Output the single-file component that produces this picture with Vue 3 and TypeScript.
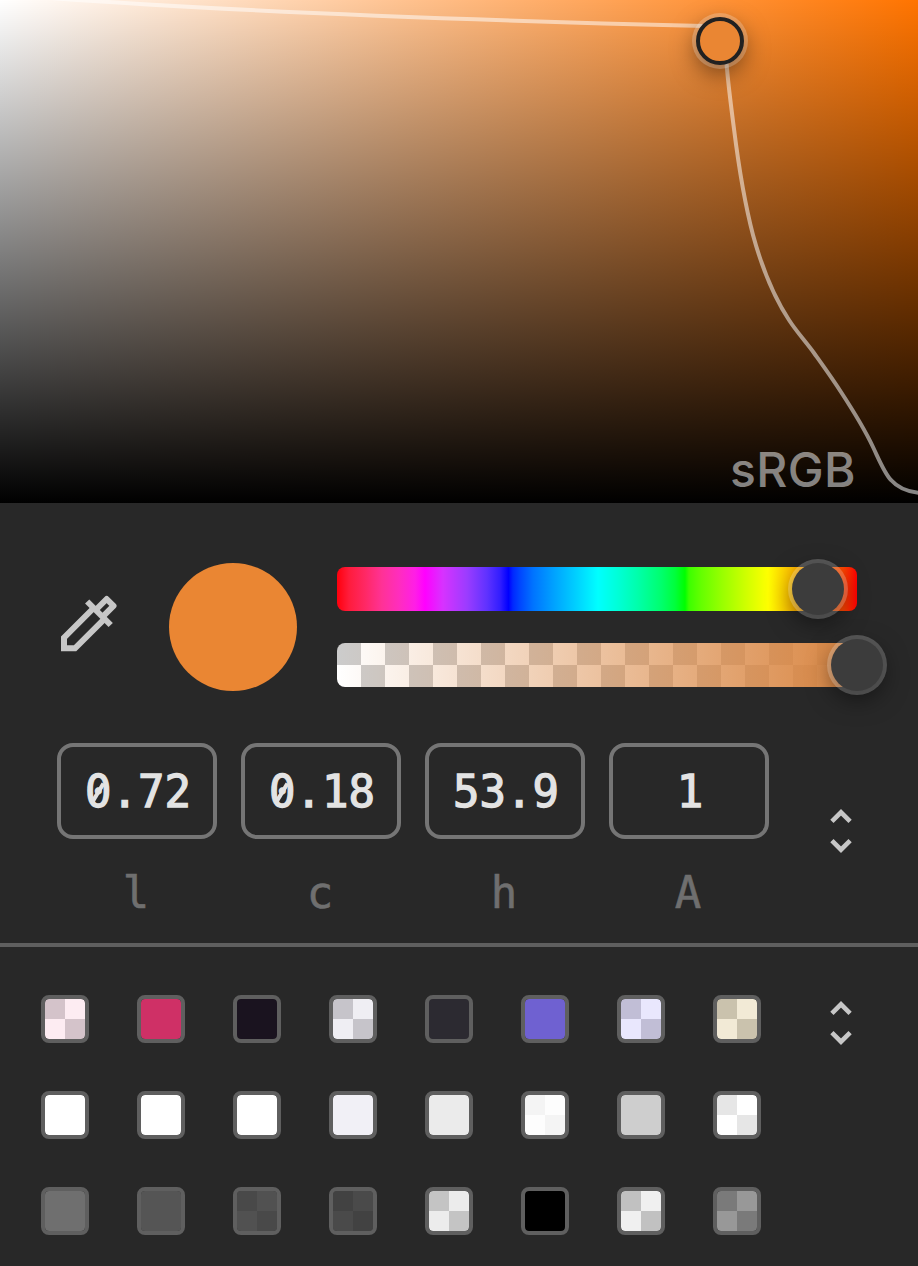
<script setup lang="ts">
interface Channel {
  label: string
  value: string
}

interface Swatch {
  base: string
  alt?: string
}

const channels: Channel[] = [
  { label: 'l', value: '0.72' },
  { label: 'c', value: '0.18' },
  { label: 'h', value: '53.9' },
  { label: 'A', value: '1' },
]

// `alt` is the tone of the darker checkerboard cells of a translucent colour.
const swatches: Swatch[] = [
  { base: '#fdecf2', alt: '#d4c3ca' },
  { base: '#cf3066' },
  { base: '#1a131f' },
  { base: '#efeef3', alt: '#c6c4ca' },
  { base: '#2c2a31' },
  { base: '#6f61d1' },
  { base: '#e9e7fd', alt: '#c1bed6' },
  { base: '#f2ead6', alt: '#cac2ad' },
  { base: '#ffffff' },
  { base: '#ffffff' },
  { base: '#ffffff' },
  { base: '#f1f0f6' },
  { base: '#ebebeb' },
  { base: '#fdfdfd', alt: '#f4f4f4' },
  { base: '#cecece' },
  { base: '#ffffff', alt: '#e6e6e6' },
  { base: '#6f6f6f' },
  { base: '#555555' },
  { base: '#515151', alt: '#494949' },
  { base: '#4a4a4a', alt: '#424242' },
  { base: '#ececec', alt: '#c4c4c4' },
  { base: '#000000' },
  { base: '#f0f0f0', alt: '#c1c1c1' },
  { base: '#989898', alt: '#7a7a7a' },
]
</script>

<template>
  <main class="picker">
    <section class="plane">
      <svg class="gamut" viewBox="0 0 918 503" aria-hidden="true">
        <path d="M50 -2 C200 9 400 18.500 704 26" />
        <path
          d="M726.500 63 C728 83 731 106 734 129 C740 177 747 212 753 235 C762 268 774 297 789 320 C796 331 806 342 814 353 C824 367 832 378 841 392 C856 415 865 430 873 447 C881 464 885 474 891 480 C898 488 909 492 920 493"
        />
      </svg>
      <span class="gamut-label">sRGB</span>
      <span class="pointer"></span>
    </section>

    <section class="controls">
      <button class="dropper" aria-label="Pick a color">
        <svg viewBox="57 129 180 180" width="60" height="60">
          <path d="M161 174 L72 263 V295 H105 L193.500 206.500" />
          <path class="cap" d="M167 180 L200 147 L220.500 167.500 L187.500 200.500" />
          <path d="M141.500 154.500 L212 225" />
        </svg>
      </button>
      <div class="preview"></div>
      <div class="sliders">
        <div class="track hue"><span class="thumb hue-thumb"></span></div>
        <div class="track alpha"><span class="thumb alpha-thumb"></span></div>
      </div>
    </section>

    <section class="values">
      <div class="channels">
        <label v-for="channel in channels" :key="channel.label" class="channel">
          <span class="field"
            ><span
              v-for="(char, index) in channel.value"
              :key="index"
              :class="{ zero: char === '0' }"
              >{{ char }}</span
            ></span
          >
          <span class="name">{{ channel.label }}</span>
        </label>
      </div>
      <button class="switcher" aria-label="Change format">
        <svg viewBox="0 0 24 48" width="24" height="48">
          <path d="M2.900 15.400 L12 6.300 L21.100 15.400" />
          <path d="M2.900 34.600 L12 43.700 L21.100 34.600" />
        </svg>
      </button>
    </section>

    <section class="palette">
      <div class="swatches">
        <span
          v-for="(swatch, index) in swatches"
          :key="index"
          class="swatch"
          :style="{ '--base': swatch.base, '--alt': swatch.alt ?? swatch.base }"
        ></span>
      </div>
      <button class="switcher" aria-label="Change palette">
        <svg viewBox="0 0 24 48" width="24" height="48">
          <path d="M2.900 15.400 L12 6.300 L21.100 15.400" />
          <path d="M2.900 34.600 L12 43.700 L21.100 34.600" />
        </svg>
      </button>
    </section>
  </main>
</template>

<style>
body {
  background: #282828;
}
</style>

<style scoped>
.picker {
  box-sizing: border-box;
  width: 918px;
  height: 1266px;
  overflow: hidden;
  background: #282828;
  color: #e3e3e3;
  font-family: Inter, 'Liberation Sans', sans-serif;
}

.plane {
  position: relative;
  height: 503px;
  overflow: hidden;
  background:
    linear-gradient(to bottom, transparent, #000),
    linear-gradient(to right, #fff, #ff7400);
}

.gamut {
  display: block;
  width: 918px;
  height: 503px;
  fill: none;
  stroke: rgba(255, 255, 255, 0.52);
  stroke-width: 4;
}

.gamut-label {
  position: absolute;
  right: 62px;
  bottom: 4px;
  color: rgba(255, 255, 255, 0.52);
  font-size: 48px;
  font-weight: 450;
  letter-spacing: 0.4px;
  line-height: 58px;
}

.pointer {
  position: absolute;
  top: 17px;
  left: 696px;
  box-sizing: border-box;
  width: 48px;
  height: 48px;
  border: 4px solid #212121;
  border-radius: 50%;
  background: #ea8633;
  box-shadow:
    0 0 0 4px rgba(255, 255, 255, 0.22),
    0 8px 24px rgba(0, 0, 0, 0.5);
}

button {
  padding: 0;
  border: 0;
  background: none;
}

button svg {
  display: block;
  fill: none;
  stroke: #c7c7c7;
}

.controls {
  display: flex;
  align-items: center;
  height: 128px;
  padding: 60px 0 0 59px;
}

.dropper {
  margin-top: -8px;
}

.dropper svg {
  stroke-width: 18;
}

.switcher svg {
  stroke-width: 4.6;
}

.cap {
  stroke-linejoin: round;
}

.preview {
  width: 128px;
  height: 128px;
  margin-left: 50px;
  border-radius: 50%;
  background: #ea8633;
}

.sliders {
  display: flex;
  flex-direction: column;
  gap: 32px;
  width: 520px;
  margin-left: 40px;
}

.track {
  position: relative;
  height: 44px;
  border-radius: 8px;
}

.hue {
  background: linear-gradient(
    to right,
    #ff000c 0,
    #ff1c3c 12px,
    #ff2864 28px,
    #ff3296 45px,
    #ff2dbe 62px,
    #ff1ee6 78px,
    #f0f 88px,
    #d732ff 106px,
    #9b3cff 130px,
    #5f32ff 150px,
    #321eff 163px,
    #00f 171.500px,
    #0028ff 176px,
    #0046ff 183px,
    #0073ff 196px,
    #00a0ff 216px,
    #00d2ff 240px,
    #0ff 261px,
    #00ffd7 281px,
    #00ffaa 301px,
    #00ff6e 324px,
    #00ff3c 338px,
    #0f0 348px,
    #3cff00 352px,
    #64ff00 364px,
    #96ff00 384px,
    #cdff00 408px,
    #ff0 431px,
    #ffc800 451px,
    #ff7800 482px,
    #ff4600 506px,
    #f00 520px
  );
}

.alpha {
  background:
    linear-gradient(to right, rgba(217, 134, 66, 0), rgb(217, 134, 66)),
    conic-gradient(#fff 25%, #ccc 0 50%, #fff 0 75%, #ccc 0) 0 -2px / 48px 48px;
}

.thumb {
  position: absolute;
  top: -4px;
  width: 52px;
  height: 52px;
  border-radius: 50%;
  background: #3c3c3c;
  box-shadow:
    0 0 0 4px rgba(255, 255, 255, 0.21),
    0 8px 24px rgba(0, 0, 0, 0.5);
}

.hue-thumb {
  left: 455px;
}

.alpha-thumb {
  left: 494px;
}

.values {
  display: flex;
  box-sizing: border-box;
  height: 256px;
  padding: 52px 0 0 57px;
  border-bottom: 4px solid #5f5f5f;
}

.channels {
  display: flex;
  gap: 24px;
}

.channel {
  display: flex;
  flex-direction: column;
  align-items: center;
  width: 160px;
  font-family: 'DejaVu Sans Mono', monospace;
  font-size: 44px;
}

.field {
  box-sizing: border-box;
  width: 160px;
  height: 96px;
  padding: 1px 0 0 2px;
  border: 4px solid #757575;
  border-radius: 16px;
  line-height: 88px;
  text-align: center;
  -webkit-text-stroke: 1.3px #e3e3e3;
}

.zero {
  position: relative;
}

.zero::after {
  content: '';
  position: absolute;
  top: 50%;
  left: 50%;
  width: 3.6px;
  height: 21px;
  margin: -10px 0 0 -1.8px;
  background: #e3e3e3;
  transform: rotate(31deg);
}

.name {
  margin: 28px 2px 0 0;
  color: #6f6f6f;
  line-height: 52px;
  -webkit-text-stroke: 0.6px #6f6f6f;
}

.values .switcher {
  align-self: flex-start;
  margin: 63px 0 0 60px;
}

.palette {
  display: flex;
  align-items: flex-start;
  padding: 48px 0 0 41px;
}

.swatches {
  display: grid;
  grid-template-columns: repeat(8, 48px);
  gap: 48px;
}

.swatch {
  box-sizing: border-box;
  width: 48px;
  height: 48px;
  border: 4px solid #5f5f5f;
  border-radius: 8px;
  background: conic-gradient(
      var(--base) 25%,
      var(--alt) 0 50%,
      var(--base) 0 75%,
      var(--alt) 0
    )
    padding-box;
}

.palette .switcher {
  margin: 3px 0 0 68px;
}
</style>
